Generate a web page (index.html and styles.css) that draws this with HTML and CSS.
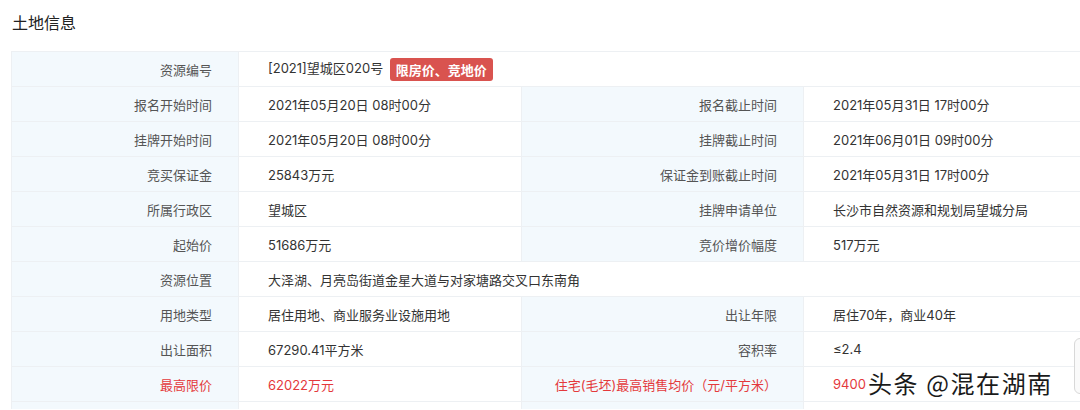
FILE: index.html
```html
<!DOCTYPE html>
<html lang="zh-CN">
<head>
    <meta charset="UTF-8">
    <title>土地信息</title>
    <link rel="stylesheet" href="styles.css">
</head>
<body>
    <h3 class="title">土地信息</h3>

    <table class="land-table">
        <colgroup>
            <col class="c-label">
            <col class="c-value">
            <col class="c-label2">
            <col>
        </colgroup>
        <tr>
            <th>资源编号</th>
            <td colspan="3">[2021]望城区020号 <span class="tag">限房价、竞地价</span></td>
        </tr>
        <tr>
            <th>报名开始时间</th>
            <td>2021年05月20日 08时00分</td>
            <th>报名截止时间</th>
            <td>2021年05月31日 17时00分</td>
        </tr>
        <tr>
            <th>挂牌开始时间</th>
            <td>2021年05月20日 08时00分</td>
            <th>挂牌截止时间</th>
            <td>2021年06月01日 09时00分</td>
        </tr>
        <tr>
            <th>竞买保证金</th>
            <td>25843万元</td>
            <th>保证金到账截止时间</th>
            <td>2021年05月31日 17时00分</td>
        </tr>
        <tr>
            <th>所属行政区</th>
            <td>望城区</td>
            <th>挂牌申请单位</th>
            <td>长沙市自然资源和规划局望城分局</td>
        </tr>
        <tr>
            <th>起始价</th>
            <td>51686万元</td>
            <th>竞价增价幅度</th>
            <td>517万元</td>
        </tr>
        <tr>
            <th>资源位置</th>
            <td colspan="3">大泽湖、月亮岛街道金星大道与对家塘路交叉口东南角</td>
        </tr>
        <tr>
            <th>用地类型</th>
            <td>居住用地、商业服务业设施用地</td>
            <th>出让年限</th>
            <td>居住70年，商业40年</td>
        </tr>
        <tr>
            <th>出让面积</th>
            <td>67290.41平方米</td>
            <th>容积率</th>
            <td>≤2.4</td>
        </tr>
        <tr class="red">
            <th>最高限价</th>
            <td>62022万元</td>
            <th>住宅(毛坯)最高销售均价（元/平方米）</th>
            <td>9400</td>
        </tr>
        <tr class="tail">
            <th></th>
            <td></td>
            <th></th>
            <td></td>
        </tr>
    </table>

    <div class="watermark">头条 @混在湖南</div>
    <div class="side-handle"></div>
</body>
</html>
```

FILE: styles.css
```css
body {
    margin: 0;
    width: 1080px;
    height: 410px;
    overflow: hidden;
    position: relative;
    background: #fff;
    font-family: "Inter", "Noto Sans CJK SC", sans-serif;
    color: #333;
}

.title {
    margin: 0;
    padding: 10px 0 0 12px;
    height: 51px;
    box-sizing: border-box;
    font-family: "Noto Sans CJK SC", sans-serif;
    font-size: 16px;
    font-weight: normal;
    line-height: 24px;
    color: #222;
}

.land-table {
    margin-left: 11px;
    width: 1069px;
    border-collapse: collapse;
    table-layout: fixed;
    font-size: 13px;
}

.c-label { width: 227px; }
.c-value { width: 283px; }
.c-label2 { width: 282px; }

.land-table th,
.land-table td {
    height: 34px;
    padding: 0;
    border: 1px solid #edf0f3;
    white-space: nowrap;
}

.land-table th {
    background: #f3f9fd;
    color: #555;
    font-weight: normal;
    text-align: right;
    padding-right: 26px;
}

.land-table td {
    background: #fff;
    padding-left: 29px;
    color: #333;
}

.land-table td:last-child {
    border-right: none;
}

.land-table .tail th,
.land-table .tail td {
    height: 7px;
    border-bottom: none;
}

.tag {
    display: inline-block;
    margin-left: 3px;
    padding: 0 6px;
    height: 23px;
    line-height: 23px;
    background: #d9534f;
    color: #fff;
    font-family: "Noto Sans CJK SC", sans-serif;
    font-weight: bold;
    border-radius: 3px;
    vertical-align: middle;
}

.red th,
.red td {
    color: #e4393c;
}

.watermark {
    position: absolute;
    left: 868px;
    top: 367px;
    font-family: "Noto Sans CJK SC", sans-serif;
    font-size: 24px;
    line-height: 32px;
    color: #1a1a1a;
    letter-spacing: 1.6px;
    text-shadow: 0 0 2px #fff, 0 0 2px #fff;
}

.side-handle {
    position: absolute;
    left: 1074px;
    top: 338px;
    width: 20px;
    height: 54px;
    border: 1px solid #d8d8d8;
    border-radius: 6px;
    background: #fafafa;
}
```
